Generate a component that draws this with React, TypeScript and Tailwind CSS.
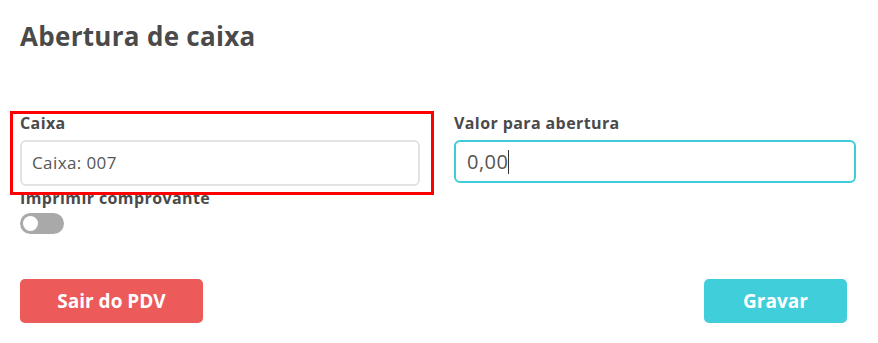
export default function App() {
  return (
    <div
      className="relative w-[878px] h-[343px] bg-white text-[#4a4a4a]"
      style={{ fontFamily: '"Open Sans", "Liberation Sans", sans-serif' }}
    >
      <div className="flex flex-col px-5 pt-5">
        <h1 className="text-[26px] leading-8 font-bold tracking-[0.3px] text-[#4a4a4a]">Abertura de caixa</h1>

        <div className="mt-[61px] flex gap-[34px]">
          {/* Caixa */}
          <div className="flex w-[400px] flex-col">
            <label className="text-[16px] leading-5 font-bold tracking-[0.4px]">Caixa</label>
            <div className="mt-[7px] flex h-[46px] items-center rounded-md border-2 border-[#e3e3e3] px-[10px] text-[17px] tracking-[0.4px] text-[#555]">
              Caixa: 007
            </div>
            <label className="mt-[2px] text-[16px] leading-5 font-bold tracking-[0.4px]">Imprimir comprovante</label>
            {/* Toggle */}
            <div className="mt-[5px] flex h-[21px] w-[44px] items-center rounded-full bg-[#a9a9a9] px-[3px]">
              <div className="h-[15px] w-[15px] rounded-full bg-white" />
            </div>
          </div>

          {/* Valor */}
          <div className="flex w-[402px] flex-col">
            <label className="text-[16px] leading-5 font-bold tracking-[0.4px]">Valor para abertura</label>
            <div className="mt-[7px] flex h-[43px] items-center rounded-[6px] border-2 border-[#3fccd8] px-[11px] text-[20px] tracking-[0.5px] text-[#555]">
              0,00
              <span className="inline-block h-[24px] w-px bg-[#333]" />
            </div>
          </div>
        </div>

        <div className="mt-[45px] flex justify-between pr-[11px]">
          <button className="flex h-[44px] w-[183px] items-center justify-center rounded-[5px] bg-[#ec5a5a] text-[19px] font-bold text-white">
            Sair do PDV
          </button>
          <button className="flex h-[44px] w-[143px] items-center justify-center rounded-[5px] bg-[#40ceda] text-[19px] font-bold text-white">
            Gravar
          </button>
        </div>
      </div>

      {/* highlight annotation */}
      <div className="pointer-events-none absolute left-[10px] top-[111px] h-[84px] w-[424px] border-[3px] border-[#ff0000]" />
    </div>
  )
}
